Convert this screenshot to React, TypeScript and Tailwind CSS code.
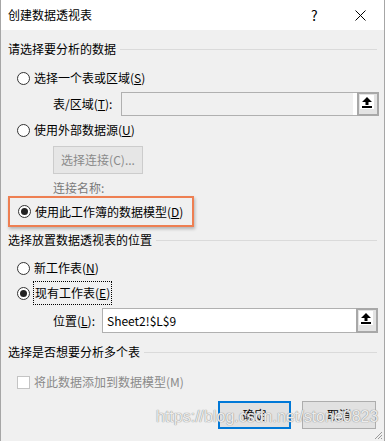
import React from 'react';

const font = { fontFamily: "'Noto Sans CJK SC', 'Noto Sans', sans-serif" };

function Radio({ checked }: { checked?: boolean }) {
  return (
    <span className="w-[13px] h-[13px] rounded-full border border-[#333333] bg-white flex items-center justify-center shrink-0">
      {checked && <span className="w-[7px] h-[7px] rounded-full bg-[#222222]" />}
    </span>
  );
}

function Header({ label }: { label: string }) {
  return (
    <div className="h-[18px] flex items-center pl-[7px] pr-[7px] gap-[4px]">
      <span className="text-[12px] leading-[18px] text-black whitespace-nowrap">{label}</span>
      <div className="flex-1 h-px bg-[#dadada]" />
    </div>
  );
}

function PickButton() {
  return (
    <div className="w-[22px] h-full border-2 border-[#a8a8a8] bg-[#e3e3e3] flex items-start justify-start p-[1px] shrink-0">
      <div className="w-[14px] h-[14px] bg-white flex items-center justify-center">
        <svg width="10" height="11" viewBox="0 0 10 11">
          <path d="M5 0 L10 5 L6.5 5 L6.5 8 L3.5 8 L3.5 5 L0 5 Z" fill="#000" />
          <rect x="0" y="9" width="10" height="2" fill="#000" />
        </svg>
      </div>
    </div>
  );
}

export default function App() {
  return (
    <div className="w-[385px] h-[441px] relative overflow-hidden bg-[#f0f0f0] border-x border-[#a6a6a6] flex flex-col" style={font}>
      {/* Title bar */}
      <div className="h-[30px] bg-white flex items-center pl-[7px] shrink-0">
        <span className="text-[12px] leading-[16px] text-black flex-1">创建数据透视表</span>
        <span className="text-[14px] leading-[16px] text-black w-[10px] mr-[34px]">?</span>
        <svg width="11" height="11" viewBox="0 0 11 11" className="mr-[18px]">
          <path d="M0.5 0.5 L10.5 10.5 M10.5 0.5 L0.5 10.5" stroke="#000" strokeWidth="1" />
        </svg>
      </div>

      <div className="mt-[10px]">
        <Header label="请选择要分析的数据" />
      </div>

      <div className="mt-[10px] h-[20px] flex items-center pl-[16px] gap-[4px]">
        <Radio />
        <span className="text-[12px] leading-[16px]">选择一个表或区域(<u>S</u>)</span>
      </div>

      <div className="mt-[4px] h-[24px] flex items-center">
        <span className="w-[68px] pl-[52px] box-content text-[12px] leading-[16px] whitespace-nowrap">表/区域(<u>T</u>):</span>
        <div className="flex h-full">
          <div className="w-[236px] h-full border border-[#b0b0b0] bg-[#f0f0f0] border-r-0 flex">
            <div className="flex-1" />
            <div className="w-[4px] bg-white" />
          </div>
          <PickButton />
        </div>
      </div>

      <div className="mt-[4px] h-[20px] flex items-center pl-[16px] gap-[4px]">
        <Radio />
        <span className="text-[12px] leading-[16px]">使用外部数据源(<u>U</u>)</span>
      </div>

      <div className="mt-[6px] h-[28px] pl-[52px] flex">
        <div className="w-[90px] h-full border border-[#cccccc] bg-[#e6e6e6] flex items-center justify-center">
          <span className="text-[12px] leading-[16px] text-[#8a8a8a]">选择连接(C)...</span>
        </div>
      </div>

      <div className="mt-[6px] h-[16px] flex items-center pl-[52px]">
        <span className="text-[12px] leading-[16px] text-[#7a7a7a]">连接名称:</span>
      </div>

      <div className="ml-[7px] w-[186px] h-[31px] border-2 border-[#ee7f52] shadow-[1px_2px_3px_rgba(0,0,0,0.25)] flex items-center pl-[8px] gap-[4px]">
        <Radio checked />
        <span className="text-[12px] leading-[16px]">使用此工作簿的数据模型(<u>D</u>)</span>
      </div>

      <div className="mt-[4px]">
        <Header label="选择放置数据透视表的位置" />
      </div>

      <div className="mt-[9px] h-[20px] flex items-center pl-[16px] gap-[4px]">
        <Radio />
        <span className="text-[12px] leading-[16px]">新工作表(<u>N</u>)</span>
      </div>

      <div className="mt-[3px] h-[24px] flex items-center pl-[16px] gap-[3px]">
        <Radio checked />
        <span className="h-[24px] px-[1px] border border-dotted border-black flex items-center text-[12px] leading-[16px]">现有工作表(<u>E</u>)</span>
      </div>

      <div className="mt-[3px] h-[25px] flex items-center">
        <span className="w-[49px] pl-[52px] box-content text-[12px] leading-[16px] whitespace-nowrap">位置(<u>L</u>):</span>
        <div className="flex h-full">
          <div className="w-[254px] h-full border border-[#b0b0b0] border-r-0 bg-white flex items-center pl-[4px]">
            <span className="text-[12px] leading-[16px] text-black">Sheet2!$L$9</span>
          </div>
          <PickButton />
        </div>
      </div>

      <div className="mt-[10px]">
        <Header label="选择是否想要分析多个表" />
      </div>

      <div className="mt-[12px] h-[18px] flex items-center pl-[16px] gap-[4px]">
        <span className="w-[13px] h-[13px] border border-[#c4c4c4] bg-white shrink-0" />
        <span className="text-[12px] leading-[16px] text-[#8a8a8a]">将此数据添加到数据模型(M)</span>
      </div>

      <div className="mt-[10px] h-[28px] flex justify-end pr-[8px] gap-[11px]">
        <div className="w-[73px] h-full border-2 border-[#0078d7] bg-[#e1e1e1] flex items-center justify-center">
          <span className="text-[12px] leading-[16px]">确定</span>
        </div>
        <div className="w-[74px] h-full border border-[#adadad] bg-[#e1e1e1] flex items-center justify-center">
          <span className="text-[12px] leading-[16px]">取消</span>
        </div>
      </div>

      {/* watermark */}
      <span
        className="absolute left-[155px] top-[407px] text-[16px] leading-[20px] text-[#ececec] whitespace-nowrap"
        style={{ fontFamily: "'Liberation Sans', Arial, sans-serif", textShadow: '0 0 1px #8a8a8a, 0 0 1px #a0a0a0' }}
      >
        https://blog.csdn.net/stone0823
      </span>

      {/* resize grip */}
      <svg width="10" height="10" viewBox="0 0 10 10" className="absolute right-[1px] bottom-[1px]">
        <path d="M9 2 L2 9 M9 5 L5 9 M9 8 L8 9" stroke="#9a9a9a" strokeWidth="1" />
      </svg>
    </div>
  );
}
